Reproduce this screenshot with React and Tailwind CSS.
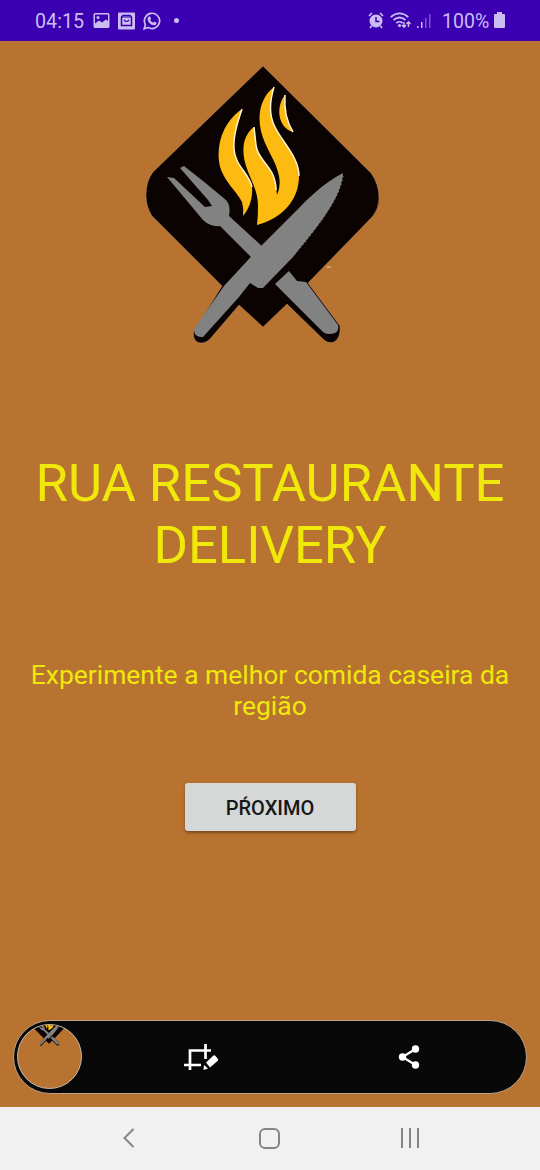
import React from "react";

function Logo({ className }) {
  return (
    <svg className={className} viewBox="120 55 285 305" aria-hidden="true">
      <path d="M263 66 L371 173 Q379 184 379 198 Q379 208 373 216 L308 283 L340 326 Q341 338 334 342 Q328 344 323 339 L287 304 L263 327 L239 305 L210 339 Q204 345 197 342 Q192 338 194 331 L222 286 L152 216 Q146 207 146 195 Q146 181 153 172 Z" fill="#0b0302" stroke="#c9a27c" strokeWidth="0.4" />
      <g fill="#fdbb12">
        <path d="M242 109 C225 121 217 140 219 161 C221 179 236 190 242 202 Q244 209 243 216 C250 208 253 196 252 187 C249 173 235 166 234 149 C233 136 238 121 242 109 Z" />
        <path d="M254 127 C243 135 241 150 246 166 C250 179 258 190 258 206 Q258 216 257 225 C280 219 299 202 299 176 C299 157 282 142 275 127 C268 114 270 100 274 87 C261 97 257 114 261 131 C265 148 276 160 279 176 Q281 187 277 195 Q276 183 272 173 C266 162 257 156 256 145 Z" />
        <path d="M285 95 C276 106 277 127 293 132 C286 121 284 109 285 95 Z" />
      </g>
      <g fill="none" stroke="#fff3d8" strokeWidth="1.500">
        <path d="M242 109 C238 121 233 136 234 149 C235 166 249 173 252 187" />
        <path d="M254 127 L256 145 C257 156 266 162 272 173 Q276 181 276 190" />
        <path d="M274 87 C270 100 268 114 275 127 C282 142 299 157 299 176" />
        <path d="M285 95 C284 109 286 121 293 132" />
      </g>
      <g fill="#828282">
        <path d="M167 177 L174 178 L205 207 L212 206 L208 200 L180 168 L184 166 L203 181 L226 200 Q231 205 229 216 L264 248 L254 260 L220 226 Q210 227 203 220 Z" />
        <path d="M275 284 L289 271 L297 281 L306 282 L338 325 Q340 334 329 334 Q325 334 323 332 Z" />
        <path d="M343 173 C322 184 309 198 299 208 L260 247 L224 286 L194 329 Q194 338 203 337 L239 297 L250 283 L258 288 L263 288 L292 258 C315 230 342 198 343 173 Z" />
      </g>
      <path d="M343 176 C340 200 315 230 292 258" fill="none" stroke="#b5b2ae" strokeWidth="0.8" strokeDasharray="1 3" />
      <path d="M327 267 h4" stroke="#d5b08f" strokeWidth="1.500" />
    </svg>
  );
}

function StatusBar() {
  return (
    <header className="flex h-[41px] shrink-0 items-center bg-[#3a00b2] pl-[35px] pr-[35px] pt-[2px] text-[#cbbcf2]">
      <span className="w-[58px] pt-[1px] text-[19.700px] leading-none">04:15</span>
      <svg className="-mt-[2px] h-[18px] w-[18px]" viewBox="0 0 18 18">
        <path fillRule="evenodd" fill="currentColor" d="M2 1h13q1.500 0 1.500 1.500v12q0 1.500-1.500 1.500H2Q.5 16 .5 14.500v-12Q.5 1 2 1Zm0 1.500v9l4-3 3 2 4-3 2 1.500v-6.500ZM5 4a1.500 1.500 0 1 1 0 3 1.500 1.500 0 0 1 0-3Z" />
      </svg>
      <svg className="-mt-[2px] ml-[7px] h-[18px] w-[18px]" viewBox="0 0 18 18">
        <rect x="0" y="0.500" width="17" height="17" rx="1" fill="currentColor" />
        <path d="M3.500 5 5 3.500h7L13.500 5v8.500h-10Z" fill="none" stroke="#3a00b2" strokeWidth="1.500" />
        <path d="M4 5h9M6 8q2.500 3 5 0" fill="none" stroke="#3a00b2" strokeWidth="1.200" />
      </svg>
      <svg className="-mt-[2px] ml-[7px] h-[18px] w-[18px]" viewBox="0 0 18 18">
        <path d="M1.200 16.800 2.400 12.600a7.600 7.600 0 1 1 2.900 2.900Z" fill="none" stroke="currentColor" strokeWidth="1.700" />
        <path d="M6 4.500 7.200 4.600 8 6.800 7.200 8q1 1.900 3 2.800l1.100-1.200 2.200 1.100q.1 2.600-2.600 2.500-5-.7-6.400-5.800Q4.700 5.300 6 4.500Z" fill="currentColor" />
      </svg>
      <span className="-mt-[2px] ml-[13px] h-[5px] w-[5px] rounded-full bg-current" />
      <div className="ml-auto flex items-center">
        <svg className="-mt-[2px] h-[17px] w-[16px]" viewBox="0 0 16 17">
          <circle cx="8" cy="9" r="6.500" fill="currentColor" />
          <path d="M1 4 4 1M12 1l3 3M3.500 14 2 16M12.500 14l1.500 2" stroke="currentColor" strokeWidth="1.700" />
          <path d="M8 5v4.500h3.500" fill="none" stroke="#3a00b2" strokeWidth="1.500" />
        </svg>
        <svg className="-mt-[2px] ml-[6px] h-[17px] w-[22px]" viewBox="0 0 22 17">
          <g fill="none" stroke="currentColor" strokeWidth="1.700">
            <path d="M.7 5q8.800-7.400 17.600 0M3.500 8q6-5 12 0M6.300 11q3.200-2.500 6.400 0" />
            <path d="M14 10v5M12 13l2 2.300 2-2.300M18.500 15v-5M16.500 12l2-2.300 2 2.300" strokeWidth="1.400" />
          </g>
          <circle cx="9.500" cy="13.500" r="1.600" fill="currentColor" />
        </svg>
        <svg className="-mt-[2px] ml-[5px] h-[16px] w-[14px]" viewBox="0 0 14 16" fill="currentColor">
          <path d="M0 13h1.500v2H0zM4 9h1.500v6H4z" />
          <path d="M8 5h1.500v10H8zM12 1h1.500v14H12z" opacity=".45" />
        </svg>
        <span className="ml-[11px] w-[47px] pt-[1px] text-[19.500px] leading-none">100%</span>
        <svg className="-mt-[2px] ml-[5px] h-[17px] w-[11px]" viewBox="0 0 11 17">
          <path d="M3 0h5v2h2q1 0 1 1v12q0 1-1 1H1q-1 0-1-1V3q0-1 1-1h2Z" fill="currentColor" />
        </svg>
      </div>
    </header>
  );
}

function CaptureToolbar() {
  return (
    <div className="mx-[13px] mt-auto mb-[13px] flex h-[74px] shrink-0 items-center rounded-full border border-[#b9a18b] bg-[#080808] pb-[1px] pl-[3px]">
      <div className="flex h-[65px] w-[65px] justify-center overflow-hidden rounded-full border border-[#c9b9a9] bg-[#b87331]">
        <Logo className="-ml-[2px] -mt-[17px] h-[40px] w-[38px] shrink-0" />
      </div>
      <svg className="ml-[101px] h-[28px] w-[36px]" viewBox="0 0 36 28" fill="none">
        <path d="M7 27V7.500H28M1 22H18M22.500 1V16" stroke="#fff" strokeWidth="2.700" />
        <path d="M23 19.500 30.500 12.500Q31.500 12 32.500 13l2.500 3Q35.500 17 34.500 18L27 24.500ZM21 22 25 25.500 20.500 27Z" fill="#fff" />
      </svg>
      <svg className="ml-[179px] h-[24px] w-[22px]" viewBox="0 0 22 24">
        <path d="M17.500 4 4.500 12l13 8" fill="none" stroke="#fff" strokeWidth="2.200" />
        <g fill="#fff"><circle cx="17.500" cy="4" r="3.700" /><circle cx="4.500" cy="12" r="3.700" /><circle cx="17.500" cy="20" r="3.700" /></g>
      </svg>
    </div>
  );
}

function NavigationBar() {
  return (
    <nav className="flex h-[63px] shrink-0 items-center justify-between bg-[#f1f1f1] pl-[118px] pr-[121px] pb-[1px] text-[#858585]">
      <svg className="h-[22px] w-[22px]" viewBox="0 0 22 22"><path d="M15.500 2 6.500 11l9 9" fill="none" stroke="currentColor" strokeWidth="2" /></svg>
      <span className="-ml-[2px] h-[21px] w-[21px] rounded-[6px] border-2 border-current" />
      <span className="flex gap-[6px]"><i className="h-[20px] w-[2px] bg-current" /><i className="h-[20px] w-[2px] bg-current" /><i className="h-[20px] w-[2px] bg-current" /></span>
    </nav>
  );
}

export default function App() {
  return (
    <div className="flex h-[1170px] w-[540px] flex-col overflow-hidden bg-[#b87331] font-['Roboto',sans-serif]">
      <StatusBar />
      <main className="flex min-h-0 flex-1 flex-col">
        <Logo className="ml-[120px] mt-[14px] h-[305px] w-[285px] shrink-0" />
        <h1 className="mt-[92px] text-center text-[52.600px] leading-[62px] text-[#f0e80a]">RUA RESTAURANTE<br />DELIVERY</h1>
        <p className="mt-[83px] text-center text-[26.450px] leading-[31px] text-[#f0e80a]">Experimente a melhor comida caseira da<br />região</p>
        <button className="mx-auto mt-[62px] h-[48px] w-[171px] shrink-0 rounded-[3px] bg-[#d5d8d6] pt-[2px] text-[20px] font-medium text-[#171919] shadow-[0_2px_3px_rgba(0,0,0,0.35)]">PŔOXIMO</button>
        <CaptureToolbar />
      </main>
      <NavigationBar />
    </div>
  );
}
